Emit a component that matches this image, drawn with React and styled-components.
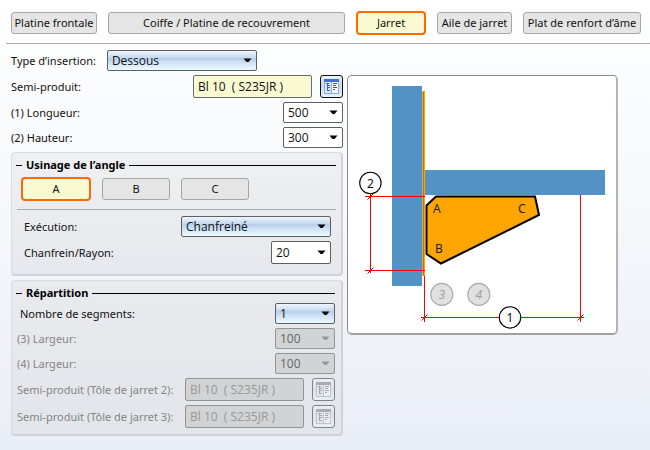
import React from 'react';
import styled, { createGlobalStyle, css } from 'styled-components';

const GlobalStyle = createGlobalStyle`
  * {
    box-sizing: border-box;
  }
  html {
    min-height: 100%;
    background: linear-gradient(#ffffff, #f5f7fb 50%, #e9edf5);
  }
  body {
    margin: 0;
    color: #111;
    font-family: 'Noto Sans', 'Open Sans', sans-serif;
    font-size: 11px;
    line-height: 16px;
  }
  button, input, select {
    font: inherit;
    color: inherit;
    margin: 0;
  }
`;

const Page = styled.main`
  padding: 11px 9px 14px 11px;
`;

// TABS
const TabBar = styled.nav`
  display: grid;
  grid-template-columns: 86fr 237fr 70fr 75fr 118fr;
  column-gap: 11px;
  align-items: center;
  height: 24px;
`;

const Toggle = styled.button`
  min-width: 0;
  height: 22px;
  padding: 0;
  border: 1px solid #a6a6a6;
  border-radius: 3px;
  background: #e5e5e5;
  line-height: 16px;
  white-space: nowrap;
  ${props =>
    props.$active &&
    css`
      height: 24px;
      border: 2px solid #ff6a00;
      border-radius: 4px;
      background: #fafad2;
    `}
`;

const Divider = styled.hr`
  height: 1px;
  margin: ${props => props.$margin};
  border: 0;
  background: #a8a8a8;
`;

// FIELDS
const Body = styled.div`
  display: grid;
  grid-template-columns: minmax(0, 332fr) minmax(0, 271fr) minmax(0, 19fr);
  column-gap: 4px;
  align-items: start;
`;

const Column = styled.div`
  display: grid;
  row-gap: 4px;
`;

const InsertionRow = styled.div`
  display: flex;
  align-items: center;
  gap: 11px;
  margin-bottom: 4px;
`;

const Row = styled.div`
  display: flex;
  align-items: center;
  gap: 8px;
  color: ${props => (props.$disabled ? '#858585' : 'inherit')};
  padding-left: ${props => props.$indent || '0'};
`;

const Label = styled.label`
  flex: ${props => (props.$hug ? 'none' : '1')};
  white-space: nowrap;
`;

const SelectBox = styled.div`
  display: grid;
  grid-template-columns: 1fr 14px;
  align-items: center;
  width: ${props => (props.$wide ? '150px' : '60px')};
  flex: none;
  svg {
    grid-area: 1 / 2;
    pointer-events: none;
  }
`;

const fieldText = css`
  font-family: 'Open Sans', 'Noto Sans', sans-serif;
  font-size: 12px;
`;

const NativeSelect = styled.select`
  ${fieldText}
  grid-area: 1 / 1 / 2 / 3;
  appearance: none;
  height: ${props => (props.$tall ? '23px' : '21px')};
  padding: 0 4px;
  border: 1px solid #5f5f5f;
  border-radius: 2px;
  background: ${props =>
    props.$blue ? 'linear-gradient(#eef5fd, #c9dcf1 32%, #b7cfea 40%, #cfe2f5 62%, #eafafe)' : '#fff'};
  &:disabled {
    border-color: #949494;
    background: #d2d3d4;
    color: #666;
    opacity: 1;
  }
`;

const Select = ({ id, value, wide, blue, tall, disabled }) => (
  <SelectBox $wide={wide}>
    <NativeSelect id={id} $blue={blue} $tall={tall} disabled={disabled} defaultValue={value}>
      <option>{value}</option>
    </NativeSelect>
    <svg width="9" height="5" viewBox="0 0 9 5" aria-hidden="true">
      <path d="M0.5 0.5H8.5L5.5 4H3.5Z" fill={disabled ? '#969696' : '#000'} />
    </svg>
  </SelectBox>
);

const ProductInput = styled.input`
  ${fieldText}
  flex: none;
  width: 119px;
  height: 23px;
  padding: 0 4px;
  border: 1px solid #6b6b6b;
  border-radius: 2px;
  background: #fafad2;
  white-space: pre;
  &:disabled {
    border-color: #949494;
    background: #d2d3d4;
    color: #989898;
  }
`;

const CatalogButton = styled.button`
  display: grid;
  place-items: center;
  flex: none;
  width: 23px;
  height: 23px;
  padding: 0;
  border: 1px solid #111;
  border-radius: 3px;
  background: linear-gradient(#eef4fc, #c3d8f0 45%, #e6f5fd);
  &:disabled {
    border-color: #7d838b;
    background: linear-gradient(#eceff3, #dae2ea 45%, #e8f0f5);
  }
`;

const CatalogIcon = ({ disabled }) => {
  const tree = disabled ? '#a3a7af' : '#3a68c4';
  const text = disabled ? '#a3a6ad' : '#3d4f78';
  return (
    <svg width="17" height="17" viewBox="0 0 17 17" shapeRendering="crispEdges" aria-hidden="true">
      <rect x="1" y="1" width="15" height="15" fill={disabled ? '#c0c3c9' : '#8fa8d8'} />
      <rect x="1" y="1" width="15" height="3" fill={disabled ? '#a9acb2' : '#3f6fd0'} />
      <rect x="2" y="4" width="6" height="11" fill={disabled ? '#e3e5e9' : '#dbe7fb'} />
      <rect x="9" y="4" width="6" height="11" fill={disabled ? '#eeeff1' : '#ffffff'} />
      <path d="M3 5.5H6M4.5 6V13M5 7.5H7M5 9.5H7M5 12.5H7" stroke={tree} fill="none" />
      <path d="M10 5.5H14M10 7.5H13M10 9.5H14M10 11.5H12" stroke={text} fill="none" />
    </svg>
  );
};

const ProductRow = ({ id, label, disabled }) => (
  <Row $disabled={disabled}>
    <Label htmlFor={id}>{label}</Label>
    <ProductInput id={id} defaultValue="Bl 10  ( S235JR )" disabled={disabled} />
    <CatalogButton aria-label="Catalogue" disabled={disabled}>
      <CatalogIcon disabled={disabled} />
    </CatalogButton>
  </Row>
);

// GROUPS
const Group = styled.section`
  display: grid;
  row-gap: 4px;
  padding: ${props => props.$padding};
  border: 1px solid #d9dce0;
  border-right: 2px solid #cfd2d7;
  border-bottom: 2px solid #cfd2d7;
  border-radius: 4px;
  background: linear-gradient(#eff0f3, #e6e8ed);
  ${props => props.$flat && 'background: linear-gradient(#e9eaee, #e2e5ea);'}
`;

const GroupTitle = styled.h2`
  display: flex;
  align-items: center;
  gap: 4px;
  margin: 0 0 0 -1px;
  font-size: 11px;
  font-weight: 700;
  line-height: 12px;
  color: #000;
  &::before,
  &::after {
    content: '';
    height: 1px;
    width: 6px;
    background: #000;
  }
  &::after {
    flex: 1;
  }
`;

const CornerButtons = styled.div`
  display: grid;
  grid-template-columns: 70px 68px 68px;
  column-gap: 11px;
  align-items: center;
  padding: 2px 0 0 4px;
`;

const FieldStack = styled.div`
  display: grid;
  row-gap: 4px;
  padding: 0 5px 0 7px;
`;

// DIAGRAM
const DiagramPanel = styled.figure`
  margin: 0;
  border: 1px solid #8c8c8c;
  border-right: 2px solid #b4b4b4;
  border-bottom: 2px solid #a0a0a0;
  border-radius: 5px;
  background: #fff;
  svg {
    display: block;
    width: 100%;
    height: auto;
  }
`;

const Balloon = ({ x, y, text, muted }) => (
  <g>
    <circle
      cx={x}
      cy={y}
      r={muted ? 11 : 10.7}
      fill={muted ? '#e0e0e0' : '#fff'}
      stroke={muted ? '#a8a8a8' : '#000'}
      strokeWidth="1.1"
    />
    <text
      x={x}
      y={y + 5}
      textAnchor="middle"
      fontSize="12"
      fontStyle={muted ? 'italic' : 'normal'}
      fill={muted ? '#a0a0a0' : '#111'}
    >
      {text}
    </text>
  </g>
);

const HaunchDiagram = () => (
  <svg viewBox="0 0 268 257" role="img" aria-label="Jarret">
    <g shapeRendering="crispEdges">
      <rect x="44" y="10" width="30" height="200" fill="#5392c5" />
      <rect x="77" y="94" width="180" height="25" fill="#5392c5" />
      <rect x="74" y="15" width="3" height="185" fill="#ffa500" />
      <rect x="75" y="16" width="1" height="183" fill="#8c7a58" />
    </g>
    <path
      d="M88 120.5H187L191 139L93 187.5L78.5 178V129.5Z"
      fill="#ffa500"
      stroke="#000"
      strokeWidth="2"
    />
    <g stroke="#ff0000" fill="none">
      <path
        d="M17 120.5H77M17 194.5H77M22.5 118V197M76.5 200V246M73 241.5H236M232.5 119V246"
        shapeRendering="crispEdges"
      />
      <path d="M19.5 123.5L25.5 117.5M19.5 197.5L25.5 191.5M73.5 244.5L79.5 238.5M229.5 244.5L235.5 238.5" />
    </g>
    <Balloon x={22.4} y={107} text="2" />
    <Balloon x={162} y={241.4} text="1" />
    <Balloon x={93.8} y={218.4} text="3" muted />
    <Balloon x={130.8} y={218.4} text="4" muted />
    <g fontSize="12" fill="#222">
      <text x="85" y="137">A</text>
      <text x="87" y="177">B</text>
      <text x="170" y="137">C</text>
    </g>
  </svg>
);

const tabs = [
  'Platine frontale',
  'Coiffe / Platine de recouvrement',
  'Jarret',
  'Aile de jarret',
  'Plat de renfort d’âme',
];

const App = () => (
  <>
    <GlobalStyle />
    <Page>
      <TabBar>
        {tabs.map(tab => (
          <Toggle key={tab} $active={tab === 'Jarret'}>
            {tab}
          </Toggle>
        ))}
      </TabBar>
      <Divider $margin="8px -9px 6px -5px" />
      <InsertionRow>
        <Label $hug htmlFor="insertion">Type d’insertion:</Label>
        <Select id="insertion" value="Dessous" wide blue />
      </InsertionRow>
      <Body>
        <Column>
          <ProductRow id="product" label="Semi-produit:" />
          <Row>
            <Label htmlFor="length">(1) Longueur:</Label>
            <Select id="length" value="500" />
          </Row>
          <Row>
            <Label htmlFor="height">(2) Hauteur:</Label>
            <Select id="height" value="300" />
          </Row>
          <Group $padding="6px 5px 10px">
            <GroupTitle>Usinage de l’angle</GroupTitle>
            <CornerButtons>
              <Toggle $active>A</Toggle>
              <Toggle>B</Toggle>
              <Toggle>C</Toggle>
            </CornerButtons>
            <Divider $margin="4px 0 2px" />
            <FieldStack>
              <Row>
                <Label htmlFor="execution">Exécution:</Label>
                <Select id="execution" value="Chanfreiné" wide blue />
              </Row>
              <Row>
                <Label htmlFor="chamfer">Chanfrein/Rayon:</Label>
                <Select id="chamfer" value="20" tall />
              </Row>
            </FieldStack>
          </Group>
          <Group $padding="6px 6px 6px 5px" $flat>
            <GroupTitle>Répartition</GroupTitle>
            <Row $indent="3px">
              <Label htmlFor="segments">Nombre de segments:</Label>
              <Select id="segments" value="1" blue />
            </Row>
            <Row $disabled>
              <Label htmlFor="width3">(3) Largeur:</Label>
              <Select id="width3" value="100" disabled />
            </Row>
            <Row $disabled>
              <Label htmlFor="width4">(4) Largeur:</Label>
              <Select id="width4" value="100" disabled />
            </Row>
            <ProductRow id="product2" label="Semi-produit (Tôle de jarret 2):" disabled />
            <ProductRow id="product3" label="Semi-produit (Tôle de jarret 3):" disabled />
          </Group>
        </Column>
        <DiagramPanel>
          <HaunchDiagram />
        </DiagramPanel>
      </Body>
    </Page>
  </>
);

export default App;
